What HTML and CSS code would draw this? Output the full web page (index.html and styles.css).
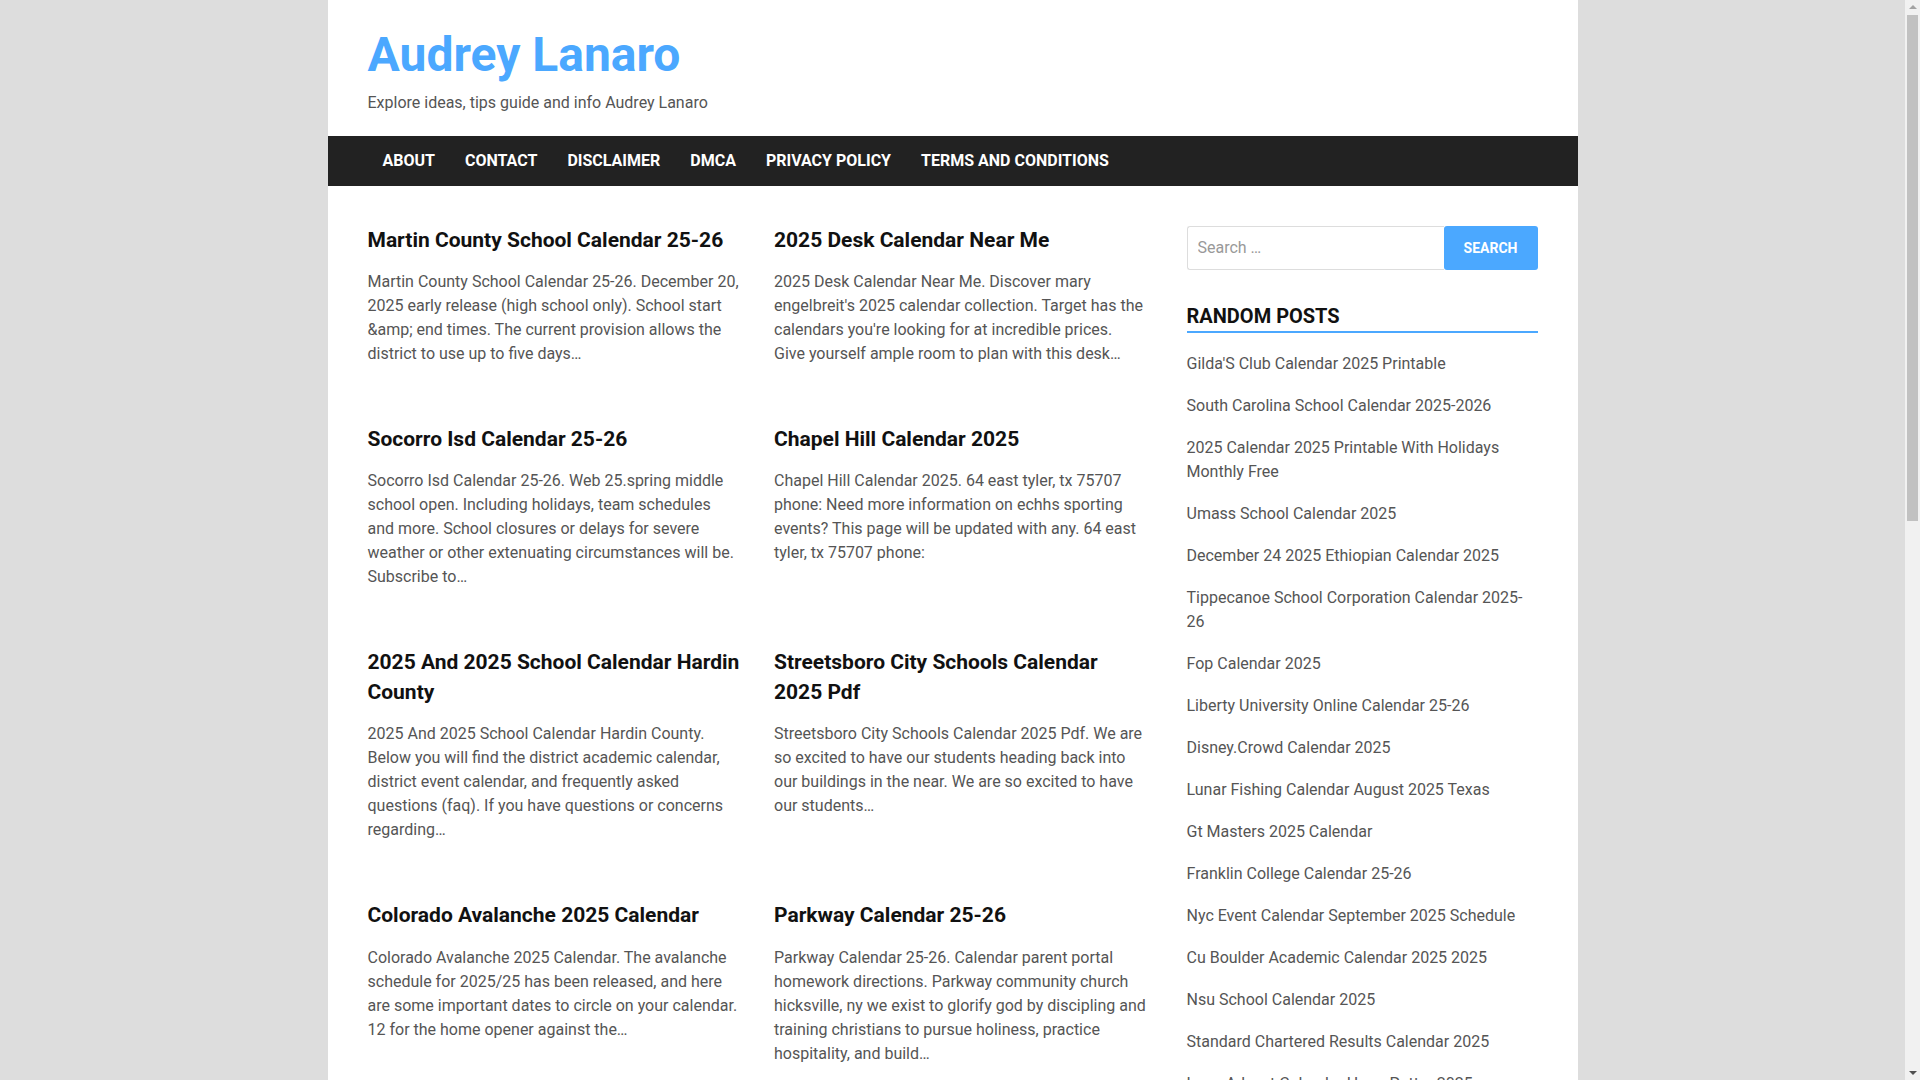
FILE: index.html
```html
<!DOCTYPE html>
<html lang="en">
<head>
<meta charset="utf-8">
<title>Audrey Lanaro</title>
<link rel="stylesheet" href="styles.css">
</head>
<body>
<div class="page">
  <header class="site-header">
    <h1 class="site-title">Audrey Lanaro</h1>
    <p class="site-description">Explore ideas, tips guide and info Audrey Lanaro</p>
  </header>
  <nav class="main-nav">
    <ul class="menu">
      <li><a href="#">About</a></li>
      <li><a href="#">Contact</a></li>
      <li><a href="#">Disclaimer</a></li>
      <li><a href="#">DMCA</a></li>
      <li><a href="#">Privacy Policy</a></li>
      <li><a href="#">Terms and Conditions</a></li>
    </ul>
  </nav>
  <div class="site-content">
    <main class="content-area">
      <div class="post-grid">
        <article class="post">
          <h2 class="entry-title">Martin County School Calendar 25-26</h2>
          <p class="entry-summary">Martin County School Calendar 25-26. December 20, 2025 early release (high school only). School start &amp;amp; end times. The current provision allows the district to use up to five days…</p>
        </article>
        <article class="post">
          <h2 class="entry-title">2025 Desk Calendar Near Me</h2>
          <p class="entry-summary">2025 Desk Calendar Near Me. Discover mary engelbreit's 2025 calendar collection. Target has the calendars you're looking for at incredible prices. Give yourself ample room to plan with this desk…</p>
        </article>
        <article class="post">
          <h2 class="entry-title">Socorro Isd Calendar 25-26</h2>
          <p class="entry-summary">Socorro Isd Calendar 25-26. Web 25.spring middle school open. Including holidays, team schedules and more. School closures or delays for severe weather or other extenuating circumstances will be. Subscribe to…</p>
        </article>
        <article class="post">
          <h2 class="entry-title">Chapel Hill Calendar 2025</h2>
          <p class="entry-summary">Chapel Hill Calendar 2025. 64 east tyler, tx 75707 phone: Need more information on echhs sporting events? This page will be updated with any. 64 east tyler, tx 75707 phone:</p>
        </article>
        <article class="post">
          <h2 class="entry-title">2025 And 2025 School Calendar Hardin County</h2>
          <p class="entry-summary">2025 And 2025 School Calendar Hardin County. Below you will find the district academic calendar, district event calendar, and frequently asked questions (faq). If you have questions or concerns regarding…</p>
        </article>
        <article class="post">
          <h2 class="entry-title">Streetsboro City Schools Calendar 2025 Pdf</h2>
          <p class="entry-summary">Streetsboro City Schools Calendar 2025 Pdf. We are so excited to have our students heading back into our buildings in the near. We are so excited to have our students…</p>
        </article>
        <article class="post">
          <h2 class="entry-title">Colorado Avalanche 2025 Calendar</h2>
          <p class="entry-summary">Colorado Avalanche 2025 Calendar. The avalanche schedule for 2025/25 has been released, and here are some important dates to circle on your calendar. 12 for the home opener against the…</p>
        </article>
        <article class="post">
          <h2 class="entry-title">Parkway Calendar 25-26</h2>
          <p class="entry-summary">Parkway Calendar 25-26. Calendar parent portal homework directions. Parkway community church hicksville, ny we exist to glorify god by discipling and training christians to pursue holiness, practice hospitality, and build…</p>
        </article>
      </div>
    </main>
    <aside class="sidebar">
      <form class="search-form">
        <input class="search-field" type="search" placeholder="Search …">
        <button class="search-submit" type="button">Search</button>
      </form>
      <section class="widget">
        <h3 class="widget-title">Random Posts</h3>
        <ul class="widget-list">
          <li>Gilda'S Club Calendar 2025 Printable</li>
          <li>South Carolina School Calendar 2025-2026</li>
          <li>2025 Calendar 2025 Printable With Holidays Monthly Free</li>
          <li>Umass School Calendar 2025</li>
          <li>December 24 2025 Ethiopian Calendar 2025</li>
          <li>Tippecanoe School Corporation Calendar 2025-26</li>
          <li>Fop Calendar 2025</li>
          <li>Liberty University Online Calendar 25-26</li>
          <li>Disney.Crowd Calendar 2025</li>
          <li>Lunar Fishing Calendar August 2025 Texas</li>
          <li>Gt Masters 2025 Calendar</li>
          <li>Franklin College Calendar 25-26</li>
          <li>Nyc Event Calendar September 2025 Schedule</li>
          <li>Cu Boulder Academic Calendar 2025 2025</li>
          <li>Nsu School Calendar 2025</li>
          <li>Standard Chartered Results Calendar 2025</li>
          <li>Lego Advent Calendar Harry Potter 2025</li>
        </ul>
      </section>
    </aside>
  </div>
</div>
<div class="fake-scrollbar" aria-hidden="true">
  <span class="sb-arrow sb-up"></span>
  <span class="sb-thumb"></span>
  <span class="sb-track"></span>
  <span class="sb-arrow sb-down"></span>
</div>
</body>
</html>
```

FILE: styles.css
```css
* {
  box-sizing: border-box;
}

html, body {
  margin: 0;
  padding: 0;
}

body {
  background: #dddddd;
  font-family: Roboto, "Liberation Sans", Arial, sans-serif;
  color: #555555;
  font-size: 16px;
  line-height: 1.5;
  padding-right: 15px;
}

.page {
  max-width: 1250px;
  margin: 0 auto;
  background: #ffffff;
}

.site-header {
  padding: 27px 40px 20px;
}

.site-title {
  margin: 0;
  font-size: 48px;
  line-height: 56px;
  font-weight: 700;
  color: #4ba8ff;
}

.site-description {
  margin: 8px 0 0;
  font-size: 16px;
  line-height: 24.5px;
  color: #555555;
}

.main-nav {
  background: #222222;
  padding: 0 40px;
}

.menu {
  list-style: none;
  margin: 0;
  padding: 0;
  display: flex;
}

.menu a {
  display: block;
  padding: 0 15px;
  line-height: 50px;
  font-size: 16px;
  font-weight: 700;
  text-transform: uppercase;
  color: #ffffff;
  text-decoration: none;
}

.site-content {
  display: flex;
  padding: 40px 40px 40px;
}

.content-area {
  width: 70%;
  padding-right: 40px;
}

.post-grid {
  display: grid;
  grid-template-columns: 1fr 1fr;
  column-gap: 34px;
  row-gap: 59px;
  align-items: start;
}

.entry-title {
  margin: 0 0 15px;
  font-size: 21px;
  line-height: 29.4px;
  font-weight: 700;
  color: #111111;
}

.entry-summary {
  margin: 0;
  font-size: 16px;
  line-height: 24px;
  color: #555555;
}

.sidebar {
  width: 30%;
}

.search-form {
  display: flex;
  height: 44px;
  margin: 0 0 32px;
}

.search-field {
  flex: 1;
  min-width: 0;
  height: 44px;
  border: 1px solid #dddddd;
  border-right: none;
  border-radius: 3px 0 0 3px;
  padding: 0 10px;
  font-family: Roboto, "Liberation Sans", Arial, sans-serif;
  font-size: 16px;
  color: #555555;
  background: #ffffff;
  outline: none;
}

.search-field::placeholder {
  color: #999999;
}

.search-submit {
  width: 94px;
  height: 44px;
  border: none;
  border-radius: 3px;
  background: #4ba8ff;
  color: #ffffff;
  font-family: Roboto, "Liberation Sans", Arial, sans-serif;
  font-size: 14px;
  font-weight: 700;
  text-transform: uppercase;
  padding: 0;
}

.widget-title {
  margin: 0;
  font-size: 20px;
  line-height: 28px;
  font-weight: 700;
  text-transform: uppercase;
  color: #111111;
  padding-bottom: 1px;
  border-bottom: 2px solid #4ba8ff;
}

.widget-list {
  list-style: none;
  margin: 0;
  padding: 0;
}

.widget-list li {
  margin-top: 18px;
  font-size: 16px;
  line-height: 24px;
  color: #555555;
}

.widget-list li:first-child {
  margin-top: 19px;
}

/* imitation of the browser scrollbar visible in the screenshot */
.fake-scrollbar {
  position: fixed;
  top: 0;
  right: 0;
  width: 15px;
  height: 100vh;
  background: #f1f1f1;
  display: flex;
  flex-direction: column;
  align-items: center;
}

.sb-arrow {
  width: 0;
  height: 0;
  flex: 0 0 0;
  border-left: 4px solid transparent;
  border-right: 4px solid transparent;
}

.sb-up {
  border-bottom: 4px solid #a3a3a3;
  margin: 5px 0 6px;
}

.sb-down {
  border-top: 4px solid #505050;
  margin: 6px 0 5px;
}

.sb-thumb {
  flex: 0 0 506px;
  width: 11px;
  background: #c1c1c1;
}

.sb-track {
  flex: 1;
}
```
